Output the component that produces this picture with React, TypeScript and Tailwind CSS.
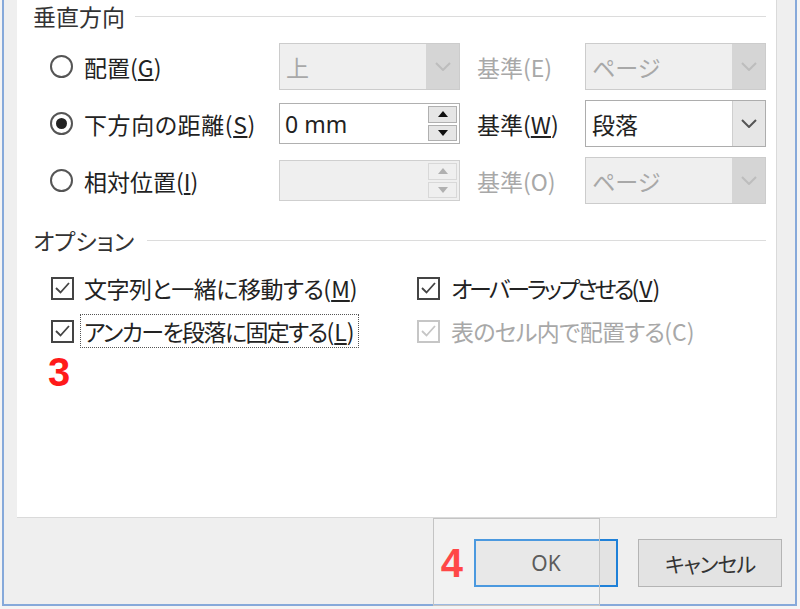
import React from "react";

function Radio({ checked }: { checked?: boolean }) {
  return (
    <span className="flex h-[23px] w-[23px] items-center justify-center rounded-full border-2 border-[#555555] bg-white">
      {checked && <span className="h-[11px] w-[11px] rounded-full bg-[#222222]" />}
    </span>
  );
}

function Check({ disabled }: { disabled?: boolean }) {
  return (
    <span
      className={`flex h-[23px] w-[23px] items-center justify-center border-2 bg-white ${
        disabled ? "border-[#c6c6c6]" : "border-[#444444]"
      }`}
    >
      <svg width="17" height="14" viewBox="0 0 17 14">
        <polyline
          points="2,7 6.5,11.5 15,2"
          fill="none"
          stroke={disabled ? "#c6c6c6" : "#444444"}
          strokeWidth="1.8"
        />
      </svg>
    </span>
  );
}

function Chevron({ color }: { color: string }) {
  return (
    <svg width="16" height="9" viewBox="0 0 16 9">
      <polyline points="1,1 8,8 15,1" fill="none" stroke={color} strokeWidth="2" />
    </svg>
  );
}

function Combo({ value, disabled }: { value: string; disabled?: boolean }) {
  return (
    <div
      className={`flex h-[47px] w-[181px] border ${
        disabled ? "border-[#cccccc] bg-[#efefef] text-[#a8a8a8]" : "border-[#adadad] bg-white text-[#222222]"
      }`}
    >
      <div className="flex flex-1 items-center pl-[6px]">{value}</div>
      <div
        className={`flex w-[33px] items-center justify-center ${
          disabled ? "bg-[#d5d5d5]" : "border-l border-[#cfcfcf] bg-[#e6e6e6]"
        }`}
      >
        <Chevron color={disabled ? "#bdbdbd" : "#555555"} />
      </div>
    </div>
  );
}

function Tri({ up, color }: { up?: boolean; color: string }) {
  return (
    <svg width="10" height="6" viewBox="0 0 10 6">
      <polygon points={up ? "0,6 10,6 5,0" : "0,0 10,0 5,6"} fill={color} />
    </svg>
  );
}

function Spin({ value, disabled }: { value: string; disabled?: boolean }) {
  const btn = disabled
    ? "flex flex-1 items-center justify-center border border-[#d8d8d8] bg-[#efefef]"
    : "flex flex-1 items-center justify-center border border-[#b0b0b0] bg-[#e6e6e6]";
  const tc = disabled ? "#b0b0b0" : "#111111";
  return (
    <div
      className={`flex h-[41px] w-[181px] border ${
        disabled ? "border-[#cfcfcf] bg-[#efefef]" : "border-[#b0b0b0] bg-white"
      }`}
    >
      <div className="flex flex-1 items-center pl-[5px] font-['Noto_Sans',sans-serif] text-[#222222]">{value}</div>
      <div className="flex w-[33px] flex-col gap-[2px] p-[2px]">
        <div className={btn}>
          <Tri up color={tc} />
        </div>
        <div className={btn}>
          <Tri color={tc} />
        </div>
      </div>
    </div>
  );
}

function GroupHeader({ title, gap }: { title: string; gap: string }) {
  return (
    <div className="flex h-[30px] items-center pl-[16px] text-[#333333]">
      <span>{title}</span>
      <span className={`h-px flex-1 bg-[#dcdcdc] mr-[10px] ${gap}`} />
    </div>
  );
}

function RadioRow({
  label,
  checked,
  field,
  refLabel,
  refDisabled,
  combo,
}: {
  label: React.ReactNode;
  checked?: boolean;
  field: React.ReactNode;
  refLabel: React.ReactNode;
  refDisabled?: boolean;
  combo: React.ReactNode;
}) {
  return (
    <div className="flex h-[47px] items-center pl-[33px]">
      <div className="w-[34px]">
        <Radio checked={checked} />
      </div>
      <div className="w-[195px] text-[#222222]">{label}</div>
      {field}
      <div className={`ml-[17px] w-[108px] ${refDisabled ? "text-[#a8a8a8]" : "text-[#222222]"}`}>{refLabel}</div>
      {combo}
    </div>
  );
}

export default function App() {
  return (
    <div className="relative h-[609px] w-[800px] overflow-hidden bg-[#f4f4f4] font-['Noto_Sans_CJK_JP',sans-serif] text-[23px] leading-[28px] [font-feature-settings:'palt']">
      <div className="ml-[2px] mr-[3px] flex h-[606px] flex-col border-b-2 border-l-2 border-r-2 border-[#86a9da] bg-[#efefef]">
        <div className="ml-[13px] h-[518px] w-[760px] border-b border-r border-[#dadada] bg-white pt-[1px]">
          <GroupHeader title="垂直方向" gap="ml-[10px]" />
          <div className="mt-[12px] flex flex-col gap-[10px]">
            <RadioRow
              label={
                <>
                  配置(<u>G</u>)
                </>
              }
              field={<Combo value="上" disabled />}
              refLabel="基準(E)"
              refDisabled
              combo={<Combo value="ページ" disabled />}
            />
            <RadioRow
              checked
              label={
                <span className="tracking-[0.6px]">
                  下方向の距離(<u>S</u>)
                </span>
              }
              field={<Spin value="0 mm" />}
              refLabel={
                <>
                  基準(<u>W</u>)
                </>
              }
              combo={<Combo value="段落" />}
            />
            <RadioRow
              label={
                <>
                  相対位置(<u>I</u>)
                </>
              }
              field={<Spin value="" disabled />}
              refLabel="基準(O)"
              refDisabled
              combo={<Combo value="ページ" disabled />}
            />
          </div>
          <div className="mt-[21px]">
            <GroupHeader title="オプション" gap="ml-[13px]" />
          </div>
          <div className="mt-[15px] flex flex-col gap-[7px]">
            <div className="flex h-[36px] items-center pl-[34px]">
              <div className="w-[33px]">
                <Check />
              </div>
              <div className="w-[333px] text-[#222222]">
                <span className="tracking-[-0.5px]">文字列と一緒に移動する</span>(<u>M</u>)
              </div>
              <div className="w-[34px]">
                <Check />
              </div>
              <div className="text-[#222222]">
                <span className="tracking-[-3px]">オーバーラップさせる</span>(<u>V</u>)
              </div>
            </div>
            <div className="flex h-[36px] items-center pl-[34px]">
              <div className="w-[29px]">
                <Check />
              </div>
              <div className="w-[337px]">
                <span className="inline-block border border-dotted border-[#555555] px-[3px] py-[2px] text-[#222222]">
                  <span className="tracking-[-1.6px]">アンカーを段落に固定する</span>(<u>L</u>)
                </span>
              </div>
              <div className="w-[34px]">
                <Check disabled />
              </div>
              <div className="text-[#a8a8a8]">
                <span className="tracking-[-0.7px]">表のセル内で配置する</span>(C)
              </div>
            </div>
          </div>
          <div className="mt-[3px] pl-[31px] font-['Liberation_Sans',sans-serif] text-[40px] font-bold leading-[40px] text-[#ff1a1a]">
            3
          </div>
        </div>
        <div className="flex flex-1 items-start justify-end pr-[13px] pt-[21px]">
          <div className="mr-[11px] mt-[4px] font-['Liberation_Sans',sans-serif] text-[40px] font-bold leading-[40px] text-[#ff1a1a]">
            4
          </div>
          <button className="flex h-[48px] w-[144px] items-center justify-center border-2 border-[#1e80d8] bg-[#e3e3e3] font-['Noto_Sans',sans-serif] text-[21px] text-[#333333]">
            OK
          </button>
          <button className="ml-[20px] flex h-[48px] w-[144px] items-center justify-center border border-[#b4b4b4] bg-[#e3e3e3] text-[21px] tracking-[-1px] text-[#333333]">
            キャンセル
          </button>
        </div>
      </div>
      <div className="pointer-events-none absolute left-[433px] top-[518px] h-[88px] w-[167px] border border-[#c4c4c4] bg-white/20" />
    </div>
  );
}
